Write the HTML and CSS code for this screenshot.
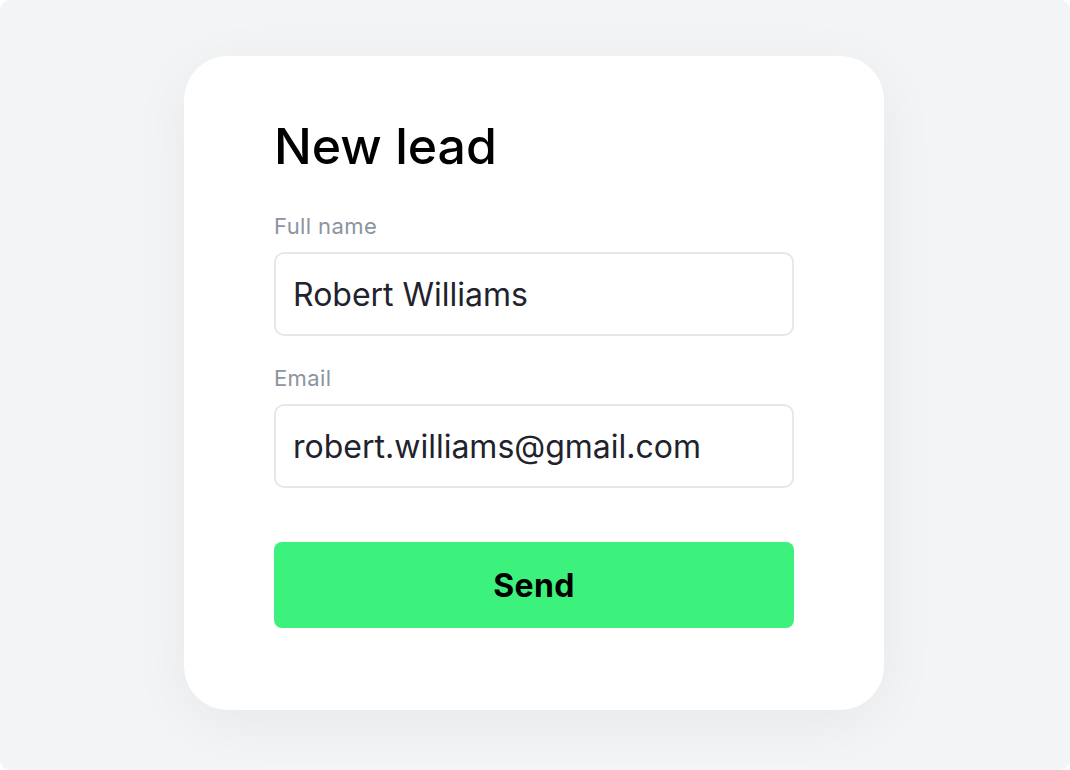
FILE: index.html
```html
<!DOCTYPE html>
<html lang="en">
<head>
    <meta charset="UTF-8">
    <meta name="viewport" content="width=device-width, initial-scale=1.0">
    <title>New lead</title>
    <link rel="stylesheet" href="styles.css">
</head>
<body>
    <div class="frame">
        <form class="card" onsubmit="return false">
            <h1>New lead</h1>

            <label class="label" for="name">Full name</label>
            <input class="field" id="name" type="text" value="Robert Williams">

            <label class="label label-next" for="email">Email</label>
            <input class="field" id="email" type="email" value="robert.williams@gmail.com">

            <button class="send-btn" type="submit">Send</button>
        </form>
    </div>
</body>
</html>
```

FILE: styles.css
```css
* {
    margin: 0;
    padding: 0;
    box-sizing: border-box;
}

body {
    font-family: Inter, 'Noto Sans', sans-serif;
    background: #fff;
    width: 1070px;
    height: 770px;
    overflow: hidden;
}

.frame {
    width: 1070px;
    height: 770px;
    background: #f3f4f6;
    border-radius: 10px;
    display: flex;
    align-items: flex-start;
    padding: 56px 0 0 184px;
}

.card {
    width: 700px;
    background: #fff;
    border-radius: 44px;
    padding: 60px 90px 82px;
    display: flex;
    flex-direction: column;
    box-shadow: 0 12px 60px rgba(0, 0, 0, 0.05);
}

h1 {
    font-size: 50px;
    line-height: 60px;
    font-weight: 500;
    color: #000;
    margin-bottom: 37px;
}

.label {
    font-size: 22px;
    line-height: 26px;
    letter-spacing: 0.4px;
    color: #8b949f;
    margin-bottom: 13px;
}

.label-next {
    margin-top: 29px;
}

.field {
    width: 100%;
    height: 84px;
    border: 2px solid #e6e7e9;
    border-radius: 10px;
    padding: 0 17px;
    font-family: inherit;
    font-size: 32px;
    color: #1f232e;
    background: #fff;
    outline: none;
}

.send-btn {
    margin-top: 54px;
    height: 86px;
    width: 100%;
    border: none;
    border-radius: 8px;
    background: #3cf27c;
    color: #000;
    font-family: inherit;
    font-size: 32px;
    font-weight: 700;
    letter-spacing: 0.3px;
    cursor: pointer;
}
```
